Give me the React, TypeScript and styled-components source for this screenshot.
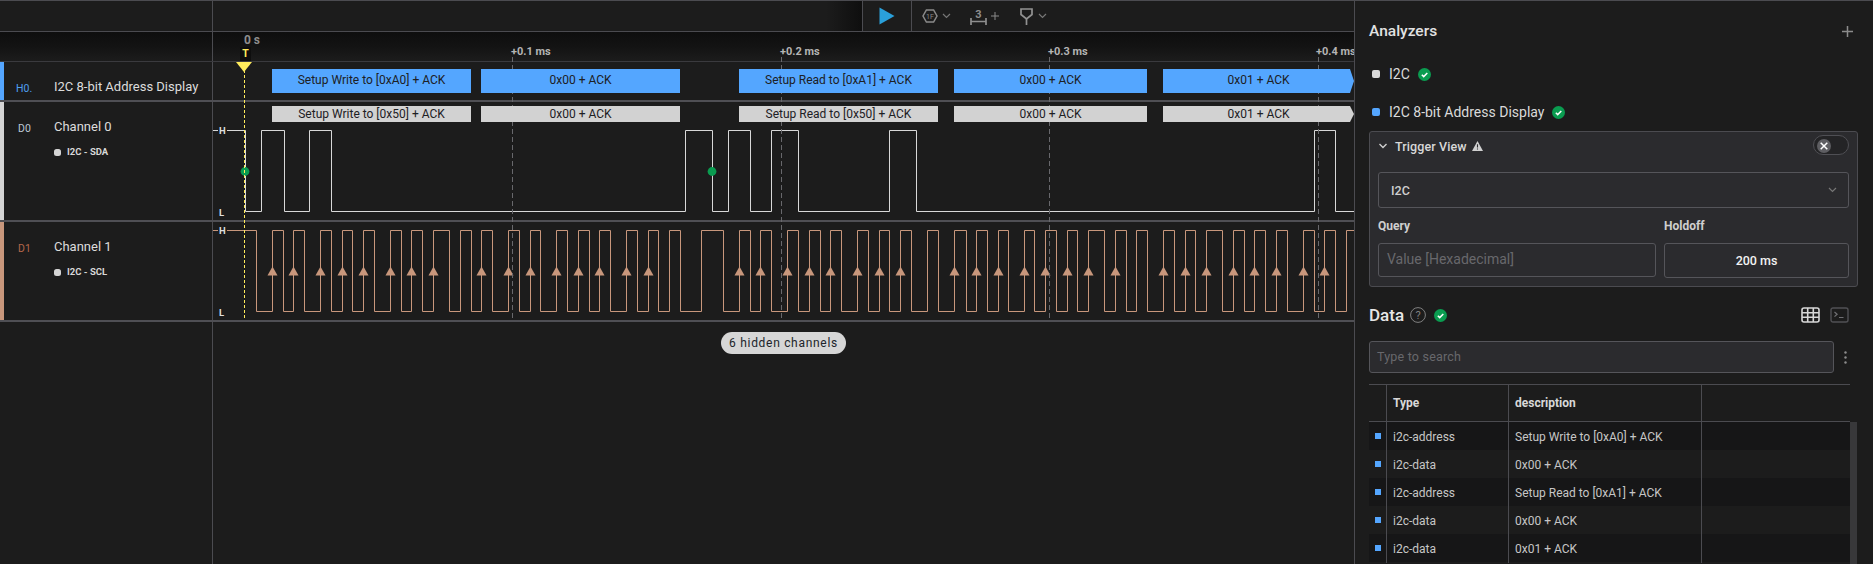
import React from "react";
import styled, { createGlobalStyle } from "styled-components";

const ORIGIN = 213;
const LINE = "#4b4b50";
const BG = "#1c1c1c";
const SCL = "#c8977c";

const GlobalStyle = createGlobalStyle`
  html, body { margin: 0; padding: 0; background: ${BG}; }
  body { font-family: Roboto, "Liberation Sans", sans-serif; color: #ddd; overflow: hidden; }
  * { box-sizing: border-box; }
`;

const Shell = styled.div`
  display: flex;
  height: 564px;
  width: 1873px;
  border-top: 1px solid ${LINE};
  overflow: hidden;
  background: ${BG};
`;
const Main = styled.main`
  width: 1354px;
  display: flex;
  flex-direction: column;
  overflow: hidden;
`;
const Toolbar = styled.div`
  display: flex;
  height: 31px;
  flex: none;
  border-bottom: 1px solid ${LINE};
`;
const HeadLabel = styled.div`
  width: 213px;
  flex: none;
  border-right: 1px solid ${LINE};
`;
const ToolGroup = styled.div`
  margin-left: 649px;
  display: flex;
  align-items: center;
  height: 30px;
  position: relative;
  &::before {
    content: "";
    position: absolute;
    right: 100%;
    top: 0;
    bottom: 0;
    width: 36px;
    background: linear-gradient(to right, rgba(10, 10, 10, 0), rgba(10, 10, 10, 0.75));
  }
`;
const PlayCell = styled.div`
  width: 50px;
  height: 30px;
  display: flex;
  align-items: center;
  justify-content: center;
  border-left: 1px solid ${LINE};
  border-right: 1px solid ${LINE};
`;
const ToolIcon = styled.svg<{ $ml: number }>`
  display: block;
  flex: none;
  margin-left: ${(p) => p.$ml}px;
`;
const Timeline = styled.div`
  position: relative;
  flex: 1;
  display: flex;
  flex-direction: column;
`;
const Ruler = styled.div`
  display: flex;
  height: 30px;
  flex: none;
  border-bottom: 1px solid #3a3a3e;
  background: linear-gradient(to bottom, #0e0e0e 0%, #131313 50%, ${BG} 100%);
`;
const RulerTrack = styled.div`
  position: relative;
  flex: 1;
`;
const Tick = styled.span`
  position: absolute;
  top: 13px;
  font-size: 11px;
  font-weight: 700;
  line-height: 14px;
  color: #b4b4b4;
  white-space: nowrap;
`;
const ZeroTick = styled(Tick)`
  top: 1px;
  color: #8e8e8e;
  font-size: 12px;
`;
const TriggerTag = styled.span`
  position: absolute;
  left: 27px;
  top: 15px;
  width: 11px;
  height: 14px;
  text-align: center;
  background: #0e0e0e;
  color: #ffec5c;
  font-size: 10.5px;
  font-weight: 700;
  line-height: 14px;
  z-index: 3;
`;
const Row = styled.div<{ $h: number }>`
  display: flex;
  flex: none;
  height: ${(p) => p.$h}px;
`;
const RowSep = styled.div`
  height: 2px;
  flex: none;
  background: #4f4f54;
`;
const LabelCell = styled.div`
  width: 213px;
  flex: none;
  display: flex;
  border-right: 1px solid ${LINE};
`;
const ColorBar = styled.div<{ $c: string }>`
  width: 4px;
  flex: none;
  background: ${(p) => p.$c};
`;
const ChannelId = styled.div<{ $c: string; $pt: number; $ml: number }>`
  width: ${(p) => 50 - p.$ml}px;
  flex: none;
  margin-left: ${(p) => p.$ml}px;
  padding-top: ${(p) => p.$pt}px;
  font-size: 10.5px;
  line-height: 14px;
  color: ${(p) => p.$c};
`;
const ChannelText = styled.div<{ $pt: number }>`
  padding-top: ${(p) => p.$pt}px;
`;
const ChannelName = styled.div`
  font-size: 13px;
  line-height: 18px;
  color: #dcdcdc;
  white-space: nowrap;
`;
const SubLine = styled.div`
  display: flex;
  align-items: center;
  gap: 6px;
  margin-top: 9px;
  font-size: 9.5px;
  font-weight: 700;
  line-height: 14px;
  color: #d8d8d8;
`;
const SubDot = styled.span`
  width: 7px;
  height: 7px;
  border-radius: 2.5px;
  background: #d4d4d4;
`;
const Track = styled.div`
  position: relative;
  flex: 1;
  overflow: hidden;
`;
const Wave = styled.svg`
  display: block;
  position: absolute;
  inset: 0;
`;
const Bubble = styled.div<{ $kind: "blue" | "grey"; $end?: boolean }>`
  position: absolute;
  z-index: 2;
  top: ${(p) => (p.$kind === "blue" ? 7 : 4)}px;
  height: ${(p) => (p.$kind === "blue" ? 24 : 16)}px;
  line-height: ${(p) => (p.$kind === "blue" ? 23 : 16)}px;
  background: ${(p) => (p.$kind === "blue" ? "#54a6ff" : "#d2d2d2")};
  color: #1d2024;
  font-size: 12px;
  text-align: center;
  white-space: nowrap;
  ${(p) =>
    p.$end
      ? "clip-path: polygon(0 0, calc(100% - 4px) 0, 100% 50%, calc(100% - 4px) 100%, 0 100%);"
      : ""}
`;
const Level = styled.span<{ $top: number }>`
  position: absolute;
  z-index: 2;
  left: 5px;
  top: ${(p) => p.$top}px;
  padding: 0 1px;
  background: ${BG};
  font-size: 9.5px;
  font-weight: 700;
  line-height: 11px;
  color: #dedede;
`;
const Overlay = styled.svg`
  position: absolute;
  left: 213px;
  top: 0;
  z-index: 1;
  pointer-events: none;
`;
const Filler = styled.div`
  display: flex;
  flex: 1;
`;
const FillerTrack = styled.div`
  flex: 1;
  padding: 10px 0 0 508px;
`;
const Pill = styled.div`
  width: 125px;
  height: 22px;
  border-radius: 11px;
  background: #d6d6d6;
  color: #20242a;
  font-size: 12px;
  font-weight: 400;
  letter-spacing: 0.7px;
  line-height: 22px;
  text-align: center;
  white-space: nowrap;
`;

const Side = styled.aside`
  width: 519px;
  flex: none;
  border-left: 1px solid ${LINE};
  padding: 20px 15px 0 14px;
  overflow: hidden;
`;
const TitleRow = styled.div`
  display: flex;
  align-items: center;
  justify-content: space-between;
  height: 20px;
  padding-right: 5px;
`;
const Title = styled.h2`
  margin: 0;
  font-size: 15.5px;
  font-weight: 500;
  line-height: 20px;
  color: #e2e2e2;
`;
const AnalyzerList = styled.div`
  margin-top: 14px;
`;
const AnalyzerRow = styled.div`
  display: flex;
  align-items: center;
  height: 38px;
  padding-left: 3px;
  font-size: 14px;
  color: #dadada;
`;
const Swatch = styled.span<{ $c: string }>`
  width: 8px;
  height: 8px;
  border-radius: 2px;
  background: ${(p) => p.$c};
  margin-right: 9px;
`;
const Badge = styled.svg<{ $ml: number }>`
  display: block;
  margin-left: ${(p) => p.$ml}px;
  flex: none;
`;
const Card = styled.section`
  width: 489px;
  padding: 0 8px 8px;
  border: 1px solid ${LINE};
  border-radius: 3px;
  background: #2b2b2e;
`;
const CardHead = styled.div`
  display: flex;
  align-items: flex-start;
  height: 30px;
`;
const CardTitle = styled.div`
  display: flex;
  align-items: center;
  height: 28px;
  gap: 5px;
  flex: 1;
  font-size: 12.5px;
  font-weight: 500;
  letter-spacing: 0.1px;
  color: #d8d8d8;
`;
const CollapseIcon = styled.svg`
  display: block;
  margin: 0 3px 0 1px;
`;
const Toggle = styled.div`
  width: 36px;
  height: 20px;
  margin-top: 3px;
  padding: 3px;
  border: 1px solid #4f4f54;
  border-radius: 10px;
  background: #242426;
`;
const Knob = styled.div`
  width: 14px;
  height: 14px;
  border-radius: 50%;
  background: #5e5e62;
  display: flex;
  align-items: center;
  justify-content: center;
`;
const SelectBox = styled.div`
  margin-top: 10px;
  height: 36px;
  padding: 0 11px 0 12px;
  border: 1px solid #55555a;
  border-radius: 3px;
  display: flex;
  align-items: center;
  justify-content: space-between;
  font-size: 12.5px;
  font-weight: 500;
  color: #cfcfcf;
`;
const FieldGrid = styled.div`
  display: grid;
  grid-template-columns: 278px 185px;
  column-gap: 8px;
  margin-top: 9px;
`;
const FieldLabel = styled.div`
  height: 18px;
  margin-bottom: 8px;
  font-size: 12px;
  font-weight: 700;
  line-height: 18px;
  color: #cfcfcf;
`;
const Placeholder = styled.div`
  height: 34px;
  padding-left: 8px;
  border: 1px solid #55555a;
  border-radius: 3px;
  font-size: 14px;
  line-height: 30px;
  color: #68686c;
`;
const ValueBox = styled.div`
  height: 35px;
  border: 1px solid #55555a;
  border-radius: 3px;
  font-size: 12.5px;
  font-weight: 500;
  line-height: 33px;
  text-align: center;
  color: #f2f2f2;
`;
const DataHead = styled.div`
  display: flex;
  align-items: center;
  height: 24px;
  margin-top: 16px;
  padding-right: 9px;
`;
const DataTitle = styled.h2`
  margin: 0;
  font-size: 17px;
  font-weight: 500;
  color: #e6e6e6;
`;
const Spacer = styled.div`
  flex: 1;
`;
const SearchRow = styled.div`
  display: flex;
  align-items: center;
  margin-top: 14px;
`;
const SearchBox = styled.div`
  width: 465px;
  height: 32px;
  padding-left: 7px;
  border: 1px solid #55555a;
  border-radius: 3px;
  background: #2b2b2e;
  font-size: 12.5px;
  letter-spacing: 0.2px;
  line-height: 30px;
  color: #68686c;
`;
const Kebab = styled.svg`
  display: block;
  margin-left: 10px;
`;
const TableWrap = styled.div`
  margin-top: 11px;
`;
const RowGrid = styled.div`
  display: grid;
  width: 481px;
  grid-template-columns: 18px 122px 193px 148px;
`;
const HeadRow = styled(RowGrid)`
  height: 38px;
  border-top: 1px solid ${LINE};
  border-bottom: 1px solid ${LINE};
`;
const HeadCell = styled.div`
  padding-left: 6px;
  border-right: 1px solid ${LINE};
  font-size: 12px;
  font-weight: 700;
  line-height: 36px;
  color: #d8d8d8;
  &:last-child { border-right: 0; }
`;
const TableBody = styled.div`
  display: flex;
  height: 170px;
`;
const BodyRows = styled.div`
  width: 481px;
`;
const BodyRow = styled(RowGrid)<{ $odd: boolean }>`
  height: 28px;
  background: ${(p) => (p.$odd ? "#161617" : BG)};
`;
const BodyCell = styled.div`
  padding: 1px 0 0 6px;
  border-right: 1px solid ${LINE};
  font-size: 12px;
  line-height: 28px;
  color: #c6c6c6;
  white-space: nowrap;
  &:last-child { border-right: 0; }
`;
const MarkCell = styled(BodyCell)`
  padding: 11px 0 0 6px;
`;
const RowMark = styled.div`
  width: 6px;
  height: 6px;
  background: #54a6ff;
`;
const Scrollbar = styled.div`
  width: 7px;
  background: #38383a;
`;

const transactions = [
  { x: 272, end: 471, head: "Setup Write to [0xA0] + ACK", raw: "Setup Write to [0x50] + ACK" },
  { x: 481, end: 680, head: "0x00 + ACK", raw: "0x00 + ACK" },
  { x: 739, end: 938, head: "Setup Read to [0xA1] + ACK", raw: "Setup Read to [0x50] + ACK" },
  { x: 954, end: 1147, head: "0x00 + ACK", raw: "0x00 + ACK" },
  { x: 1163, end: 1354, head: "0x01 + ACK", raw: "0x01 + ACK", open: true },
];
const sdaEdges = [245, 261, 284, 309, 331, 685, 712, 728, 750, 771, 798, 889, 916, 1314, 1335];
const sclEdges = [
  256, 272, 283, 293, 304, 320, 331, 342, 352, 363, 374, 390, 401, 411, 422, 433, 449, 460, 471, 481,
  492, 508, 519, 530, 540, 556, 567, 578, 589, 599, 610, 626, 637, 648, 658, 669, 680, 701, 723, 739,
  750, 760, 771, 787, 798, 809, 820, 830, 841, 857, 868, 879, 889, 900, 911, 927, 938, 954, 966, 976,
  987, 998, 1008, 1024, 1034, 1045, 1056, 1067, 1077, 1088, 1104, 1115, 1126, 1136, 1147, 1163, 1174,
  1185, 1195, 1206, 1222, 1233, 1244, 1254, 1265, 1276, 1287, 1303, 1314, 1324, 1335, 1346,
];
const noArrow = new Set([460, 669, 701, 927, 1136, 1346]);
const ticks = [
  { label: "+0.1 ms", x: 511 },
  { label: "+0.2 ms", x: 780 },
  { label: "+0.3 ms", x: 1048 },
  { label: "+0.4 ms", x: 1316 },
];
const dashes = [512.5, 781.5, 1049.5, 1318.5];
const tableRows = [
  ["i2c-address", "Setup Write to [0xA0] + ACK"],
  ["i2c-data", "0x00 + ACK"],
  ["i2c-address", "Setup Read to [0xA1] + ACK"],
  ["i2c-data", "0x00 + ACK"],
  ["i2c-data", "0x01 + ACK"],
];

function wavePoints(edges: number[], high: number, low: number) {
  const pts: string[] = [`213,${high}`];
  let level = high;
  for (const e of edges) {
    pts.push(`${e + 0.5},${level}`);
    level = level === high ? low : high;
    pts.push(`${e + 0.5},${level}`);
  }
  pts.push(`1354,${level}`);
  return pts.join(" ");
}

const Check = ({ ml }: { ml: number }) => (
  <Badge $ml={ml} width="13" height="13" viewBox="0 0 13 13">
    <circle cx="6.5" cy="6.5" r="6.5" fill="#0a9c50" />
    <path d="M3.8 6.8l1.9 1.8 3.6-3.6" fill="none" stroke="#fff" strokeWidth="1.5" />
  </Badge>
);
const Chevron = ({ ml = 0, c = "#777" }: { ml?: number; c?: string }) => (
  <ToolIcon $ml={ml} width="9" height="6" viewBox="0 0 9 6">
    <path d="M1 1l3.5 3.5L8 1" fill="none" stroke={c} strokeWidth="1.2" />
  </ToolIcon>
);

const Transactions = ({ kind }: { kind: "blue" | "grey" }) => (
  <>
    {transactions.map((t) => (
      <Bubble
        key={t.x}
        $kind={kind}
        $end={t.open}
        style={{ left: t.x - ORIGIN, width: t.end - t.x }}
      >
        {kind === "blue" ? t.head : t.raw}
      </Bubble>
    ))}
  </>
);

export default function App() {
  return (
    <Shell>
      <GlobalStyle />
      <Main>
        <Toolbar>
          <HeadLabel />
          <ToolGroup>
            <PlayCell>
              <svg width="16" height="18" viewBox="0 0 16 18">
                <path d="M0.5 0.5L15.5 9L0.5 17.5Z" fill="#2aa0da" />
              </svg>
            </PlayCell>
            <ToolIcon $ml={10} width="16" height="14" viewBox="0 0 16 14">
              <path d="M4.4 1h7.2L15 7l-3.4 6H4.4L1 7Z" fill="none" stroke="#8a8a8a" strokeWidth="1.5" />
              <text x="8" y="9.6" fontSize="7" fontFamily="Roboto" fill="#8a8a8a" textAnchor="middle">1F</text>
            </ToolIcon>
            <Chevron ml={4} />
            <ToolIcon $ml={19} width="17" height="17" viewBox="0 0 17 17">
              <text x="8.5" y="9.5" fontSize="11" fontWeight="700" fontFamily="Roboto" fill="#8e8e8e" textAnchor="middle">3</text>
              <path d="M1 10v7M16 10v7M1 13.5h15" fill="none" stroke="#8e8e8e" strokeWidth="1.7" />
            </ToolIcon>
            <ToolIcon $ml={4} width="8" height="8" viewBox="0 0 8 8">
              <path d="M4 0v8M0 4h8" stroke="#8a8a8a" strokeWidth="1" />
            </ToolIcon>
            <ToolIcon $ml={21} width="13" height="17" viewBox="0 0 13 17">
              <path d="M1 1h11v5.5L6.5 11 1 6.5Z" fill="none" stroke="#929292" strokeWidth="1.7" />
              <path d="M6.5 11v6" stroke="#929292" strokeWidth="1.7" />
            </ToolIcon>
            <Chevron ml={5} />
          </ToolGroup>
        </Toolbar>
        <Timeline>
          <Overlay width="1141" height="290" viewBox="213 32 1141 290">
            {dashes.map((x) => (
              <line key={x} x1={x} x2={x} y1="57" y2="320" stroke="#68686c" strokeDasharray="5 3" />
            ))}
            <circle cx="245" cy="171.5" r="4.4" fill="#0a9c50" />
            <circle cx="712" cy="171.5" r="4.4" fill="#0a9c50" />
            <line x1="244.5" x2="244.5" y1="70" y2="320" stroke="#ffec5c" strokeDasharray="3 2" />
            <path d="M236 62h16l-8 10Z" fill="#ffec5c" />
          </Overlay>
          <Ruler>
            <HeadLabel />
            <RulerTrack>
              <ZeroTick style={{ left: 31 }}>0 s</ZeroTick>
              <TriggerTag>T</TriggerTag>
              {ticks.map((t) => (
                <Tick key={t.label} style={{ left: t.x - ORIGIN }}>{t.label}</Tick>
              ))}
            </RulerTrack>
          </Ruler>
          <Row $h={38}>
            <LabelCell>
              <ColorBar $c="#54a6ff" />
              <ChannelId $c="#4f9ff0" $pt={20} $ml={12}>H0.</ChannelId>
              <ChannelText $pt={16}>
                <ChannelName>I2C 8-bit Address Display</ChannelName>
              </ChannelText>
            </LabelCell>
            <Track>
              <Transactions kind="blue" />
            </Track>
          </Row>
          <RowSep />
          <Row $h={118}>
            <LabelCell>
              <ColorBar $c="#d4d4d4" />
              <ChannelId $c="#bcc8d6" $pt={20} $ml={14}>D0</ChannelId>
              <ChannelText $pt={16}>
                <ChannelName>Channel 0</ChannelName>
                <SubLine><SubDot />I2C - SDA</SubLine>
              </ChannelText>
            </LabelCell>
            <Track>
              <Wave width="1141" height="118" viewBox="213 102 1141 118">
                <polyline points={wavePoints(sdaEdges, 130.5, 211.5)} fill="none" stroke="#d8d8d8" />
              </Wave>
              <Transactions kind="grey" />
              <Level $top={23}>H</Level>
              <Level $top={105}>L</Level>
            </Track>
          </Row>
          <RowSep />
          <Row $h={98}>
            <LabelCell>
              <ColorBar $c={SCL} />
              <ChannelId $c="#b5674a" $pt={20} $ml={14}>D1</ChannelId>
              <ChannelText $pt={16}>
                <ChannelName>Channel 1</ChannelName>
                <SubLine><SubDot />I2C - SCL</SubLine>
              </ChannelText>
            </LabelCell>
            <Track>
              <Wave width="1141" height="98" viewBox="213 222 1141 98">
                <polyline points={wavePoints(sclEdges, 230.5, 311.5)} fill="none" stroke={SCL} />
                {sclEdges
                  .filter((x, i) => i % 2 === 1 && !noArrow.has(x))
                  .map((x) => (
                    <path key={x} d={`M${x + 0.5} 266.5l5 9h-10Z`} fill={SCL} />
                  ))}
              </Wave>
              <Level $top={3}>H</Level>
              <Level $top={85}>L</Level>
            </Track>
          </Row>
          <RowSep />
          <Filler>
            <HeadLabel />
            <FillerTrack>
              <Pill>6 hidden channels</Pill>
            </FillerTrack>
          </Filler>
        </Timeline>
      </Main>
      <Side>
        <TitleRow>
          <Title>Analyzers</Title>
          <svg width="11" height="11" viewBox="0 0 11 11">
            <path d="M5.5 0v11M0 5.5h11" stroke="#8c8c8c" strokeWidth="1.5" />
          </svg>
        </TitleRow>
        <AnalyzerList>
          <AnalyzerRow>
            <Swatch $c="#d8d8d8" />I2C<Check ml={8} />
          </AnalyzerRow>
          <AnalyzerRow>
            <Swatch $c="#54a6ff" />I2C 8-bit Address Display<Check ml={8} />
          </AnalyzerRow>
        </AnalyzerList>
        <Card>
          <CardHead>
            <CardTitle>
              <CollapseIcon width="8" height="6" viewBox="0 0 8 6">
                <path d="M0.5 1L4 4.5 7.5 1" fill="none" stroke="#cfcfcf" strokeWidth="1.4" />
              </CollapseIcon>
              Trigger View
              <svg width="11" height="10" viewBox="0 0 11 10">
                <path d="M5.5 0L11 10H0Z" fill="#d0d0d0" />
                <path d="M5.5 3.2v3.3M5.5 7.4v1.2" stroke="#2b2b2e" strokeWidth="1.1" />
              </svg>
            </CardTitle>
            <Toggle>
              <Knob>
                <svg width="8" height="8" viewBox="0 0 8 8">
                  <path d="M0.7 0.7l6.6 6.6M7.3 0.7L0.7 7.3" stroke="#fff" strokeWidth="1.5" />
                </svg>
              </Knob>
            </Toggle>
          </CardHead>
          <SelectBox>
            I2C
            <Chevron />
          </SelectBox>
          <FieldGrid>
            <div>
              <FieldLabel>Query</FieldLabel>
              <Placeholder>Value [Hexadecimal]</Placeholder>
            </div>
            <div>
              <FieldLabel>Holdoff</FieldLabel>
              <ValueBox>200 ms</ValueBox>
            </div>
          </FieldGrid>
        </Card>
        <DataHead>
          <DataTitle>Data</DataTitle>
          <Badge $ml={6} width="16" height="16" viewBox="0 0 16 16">
            <circle cx="8" cy="8" r="7.4" fill="none" stroke="#808080" />
            <text x="8" y="12" fontSize="11" fontFamily="Roboto" fill="#808080" textAnchor="middle">?</text>
          </Badge>
          <Check ml={8} />
          <Spacer />
          <Badge $ml={0} width="19" height="16" viewBox="0 0 19 16">
            <rect x="1" y="1" width="17" height="14" rx="2" fill="none" stroke="#d8d8d8" strokeWidth="1.6" />
            <path d="M6.7 1v14M12.3 1v14M1 5.7h17M1 10.3h17" stroke="#d8d8d8" strokeWidth="1.6" />
          </Badge>
          <Badge $ml={10} width="19" height="16" viewBox="0 0 19 16">
            <rect x="1" y="1" width="17" height="14" rx="2" fill="none" stroke="#505054" strokeWidth="1.4" />
            <path d="M4.5 5l2.6 2.3-2.6 2.3M9 10.5h4.5" fill="none" stroke="#707074" strokeWidth="1.2" />
          </Badge>
        </DataHead>
        <SearchRow>
          <SearchBox>Type to search</SearchBox>
          <Kebab width="3" height="13" viewBox="0 0 3 13">
            <circle cx="1.5" cy="1.5" r="1.2" fill="#8c8c8c" />
            <circle cx="1.5" cy="6.5" r="1.2" fill="#8c8c8c" />
            <circle cx="1.5" cy="11.5" r="1.2" fill="#8c8c8c" />
          </Kebab>
        </SearchRow>
        <TableWrap>
          <HeadRow>
            <HeadCell />
            <HeadCell>Type</HeadCell>
            <HeadCell>description</HeadCell>
            <HeadCell />
          </HeadRow>
          <TableBody>
            <BodyRows>
              {tableRows.map(([type, desc], i) => (
                <BodyRow key={i} $odd={i % 2 === 0}>
                  <MarkCell><RowMark /></MarkCell>
                  <BodyCell>{type}</BodyCell>
                  <BodyCell>{desc}</BodyCell>
                  <BodyCell />
                </BodyRow>
              ))}
            </BodyRows>
            <Scrollbar />
          </TableBody>
        </TableWrap>
      </Side>
    </Shell>
  );
}
